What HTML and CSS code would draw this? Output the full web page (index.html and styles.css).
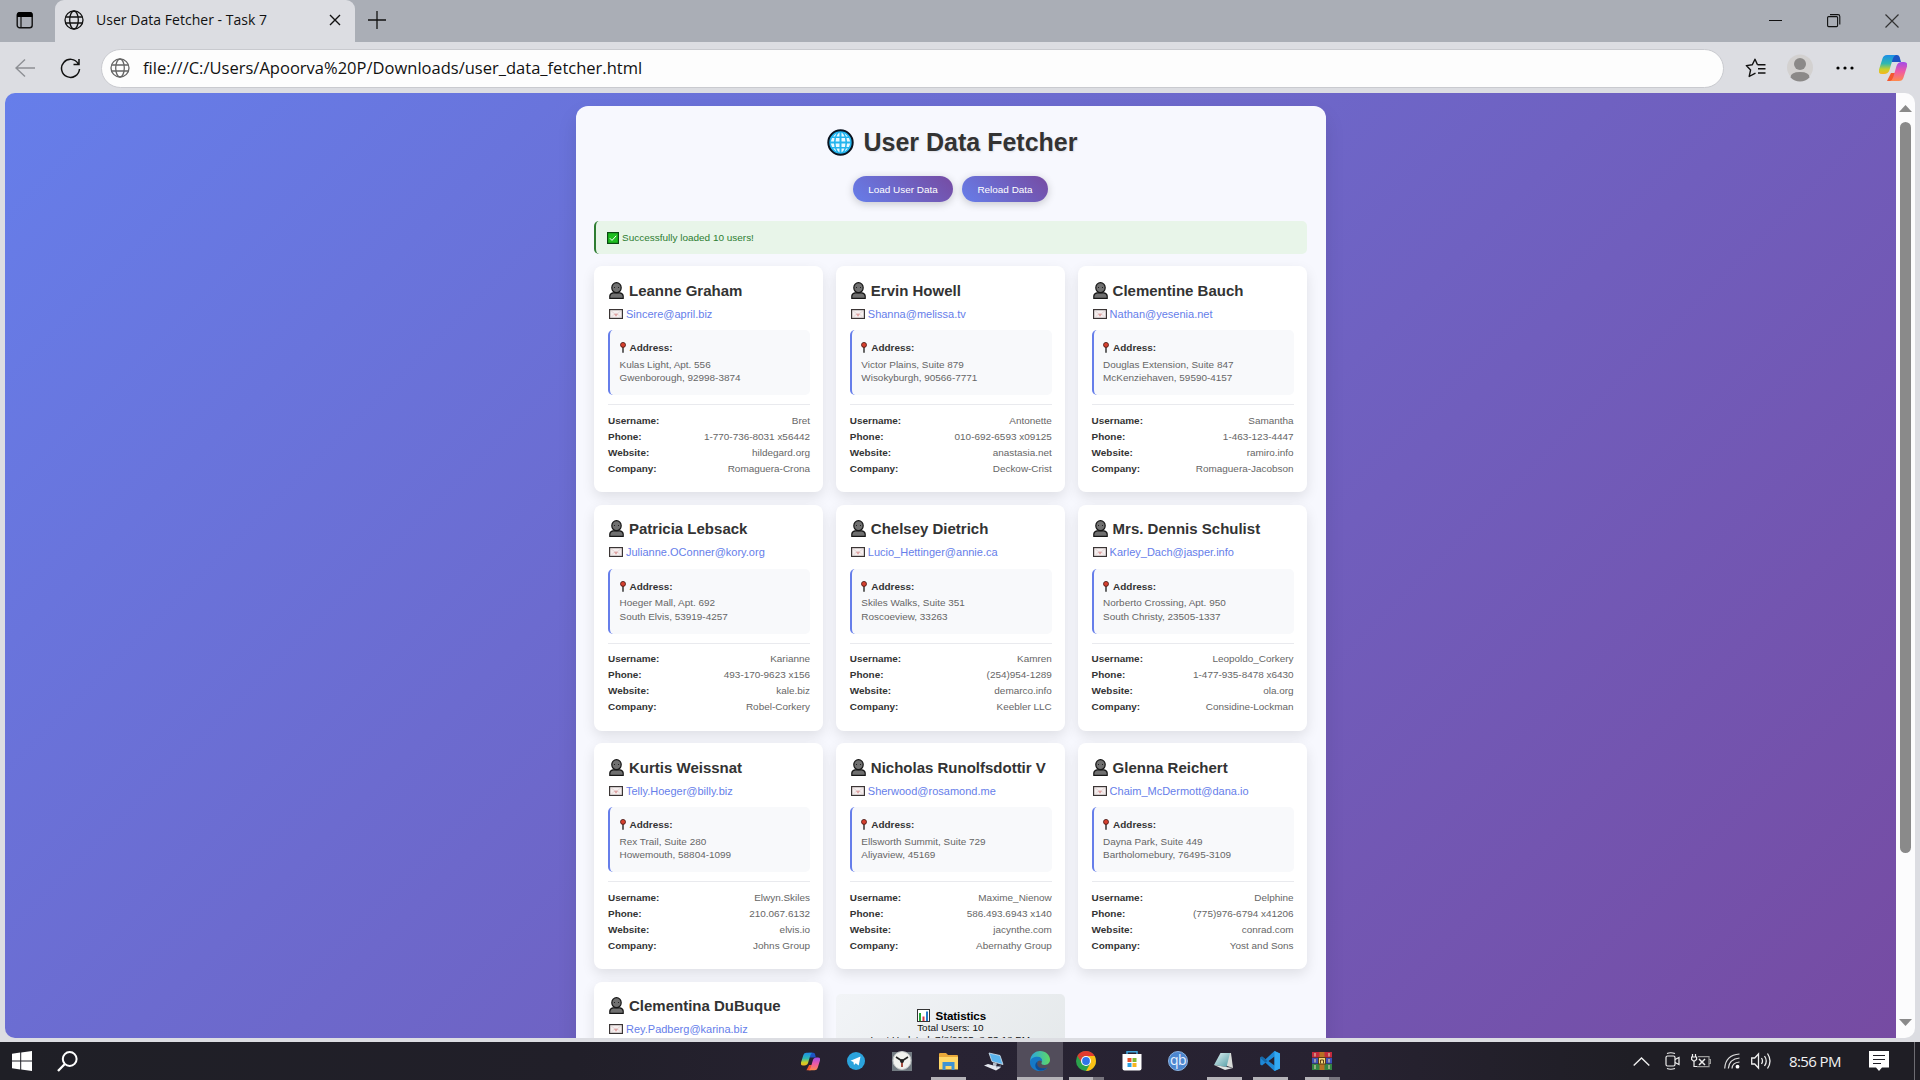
FILE: index.html
```html
<!DOCTYPE html>
<html lang="en">
<head>
<meta charset="utf-8">
<title>User Data Fetcher - Task 7</title>
<link rel="stylesheet" href="styles.css">
</head>
<body>
<svg class="defs" width="0" height="0" aria-hidden="true">
  <defs>
    <linearGradient id="cpA" x1="0" y1="0" x2="0" y2="1"><stop offset="0" stop-color="#1b8ee8"/><stop offset=".45" stop-color="#2fb8b0"/><stop offset=".75" stop-color="#c6d12a"/><stop offset="1" stop-color="#f6b51e"/></linearGradient>
    <linearGradient id="cpB" x1="0" y1="0" x2="0" y2="1"><stop offset="0" stop-color="#a24be8"/><stop offset=".5" stop-color="#ee5aa5"/><stop offset="1" stop-color="#ff8a4c"/></linearGradient>
    <linearGradient id="edA" x1="0" y1="0" x2="1" y2="0"><stop offset="0" stop-color="#2aa6e0"/><stop offset="1" stop-color="#5fd964"/></linearGradient>
    <linearGradient id="npA" x1="0" y1="0" x2="1" y2="1"><stop offset="0" stop-color="#e4f4f4"/><stop offset="1" stop-color="#4f9ba4"/></linearGradient>
    <symbol id="copilot" viewBox="0 0 28 26">
      <path d="M11 0h7q2 0 2.600 2l1.400 5h-6l-3 0z" fill="#1d55c4"/>
      <path d="M8 26h6q3 0 4-3l2-5h-8z" fill="#f4582f"/>
      <path d="M8 0h9q-2.500 1-3.300 4L10.500 15q-1.200 4-5.500 4H3q-4 0-3-4.500L3.500 3.500Q4.500 0 8 0z" fill="url(#cpA)"/>
      <path d="M20 26h-9q2.500-1 3.300-4L17.500 11q1.200-4 5.500-4h2q4 0 3 4.500l-3.500 11Q23.500 26 20 26z" fill="url(#cpB)"/>
    </symbol>
    <symbol id="globe" viewBox="0 0 20 20"><g fill="none" stroke="currentColor" stroke-width="1.300"><circle cx="10" cy="10" r="9"/><ellipse cx="10" cy="10" rx="4.300" ry="9"/><path d="M1.800 7h16.400M1.800 13h16.400"/></g></symbol>
    <symbol id="person" viewBox="0 0 15 17"><g fill="#707070" stroke="#161616" stroke-width="1.200"><path d="M.8 16.300v-2.100q0-2.700 3.200-3.400h7q3.200.7 3.200 3.400v2.100z"/><ellipse cx="7.500" cy="5.700" rx="4.700" ry="5"/></g><path d="M5.500 5v1M9.500 5v1" stroke="#222"/></symbol>
    <symbol id="mail" viewBox="0 0 14 10"><rect x=".6" y=".6" width="12.800" height="8.800" fill="#f6efef" stroke="#3b3535" stroke-width="1.200"/><path d="M2 8.500l3.500-3.500M12 8.500L8.500 5M2 1.800l5 4 5-4" fill="none" stroke="#e0d2d2" stroke-width=".8"/><path d="M5 5q2-1 4 0L7 7.800z" fill="#dfa3a3"/></symbol>
    <symbol id="pin" viewBox="0 0 6 11"><path d="M3 5v5.800" stroke="#555" stroke-width="1.800"/><circle cx="3" cy="2.900" r="2.500" fill="#d6402f" stroke="#451713" stroke-width=".8"/></symbol>
  </defs>
</svg>

<div class="tabstrip">
  <div class="tab-menu"><svg width="18" height="18" viewBox="0 0 18 18"><rect x="1.200" y="1.700" width="15" height="15" rx="2.500" fill="none" stroke="#111" stroke-width="1.400"/><path d="M1 6V3.500Q1 1 3.500 1H14q2.500 0 2.500 2.500V6z"/><path d="M5 6v10" stroke="#111" stroke-width="1.200"/></svg></div>
  <div class="tab">
    <svg width="20" height="20"><use href="#globe"/></svg>
    <span class="tab-title">User Data Fetcher - Task 7</span>
    <svg class="tab-close" width="12" height="12" viewBox="0 0 12 12"><path d="M1 1l10 10M11 1L1 11" stroke="#111" stroke-width="1.400"/></svg>
  </div>
  <svg class="new-tab" width="18" height="18" viewBox="0 0 18 18"><path d="M9 0v18M0 9h18" stroke="#111" stroke-width="1.300"/></svg>
  <div class="window-buttons">
    <svg width="14" height="14" viewBox="0 0 14 14"><path d="M0 6.500h13" stroke="#111"/></svg>
    <svg width="14" height="14" viewBox="0 0 14 14"><g fill="none" stroke="#111" stroke-width="1.100"><rect x=".6" y="2.600" width="10" height="10" rx="1"/><path d="M3 .6h8q1.800 0 1.800 1.800V10.500"/></g></svg>
    <svg width="14" height="14" viewBox="0 0 14 14"><path d="M.5.500l13 13M13.500.500l-13 13" stroke="#333" stroke-width="1.200"/></svg>
  </div>
</div>

<div class="toolbar">
  <svg class="back" width="20" height="20" viewBox="0 0 20 20"><path d="M20 10H1M10 1.500L1 10l9 8.500" fill="none" stroke="#8d8f94" stroke-width="1.400"/></svg>
  <svg class="reload" width="21" height="21" viewBox="0 0 21 21"><path d="M18.300 5.800A9 9 0 1 0 19.500 11M19 1v5.500h-5.500" fill="none" stroke="#111" stroke-width="1.500"/></svg>
  <div class="address-bar">
    <svg width="20" height="20"><use href="#globe"/></svg>
    <span class="url">file:///C:/Users/Apoorva%20P/Downloads/user_data_fetcher.html</span>
  </div>
  <svg class="favorites" width="21" height="20" viewBox="0 0 21 20"><path d="M12.500 6.800L10 1.200 7.300 6.800l-6 .8 4.300 4.300L4.200 18.500l5.300-2.800 1-.5M12.500 6.800h8M13 10.800h7.500M13 15h7.500" fill="none" stroke="#111" stroke-width="1.400" stroke-linejoin="round"/></svg>
  <svg class="avatar" width="26" height="28" viewBox="0 0 26 28"><circle cx="13" cy="13.500" r="13" fill="#d3d1d0"/><circle cx="13" cy="10" r="6" fill="#8b8988"/><path d="M3.500 23.500q0-5.500 9.500-5.500t9.500 5.500q-4 4-9.500 4t-9.500-4z" fill="#8b8988"/></svg>
  <svg class="more" width="18" height="4" viewBox="0 0 18 4"><circle cx="2" cy="2" r="1.600"/><circle cx="9" cy="2" r="1.600"/><circle cx="16" cy="2" r="1.600"/></svg>
  <svg class="copilot" width="28" height="26"><use href="#copilot"/></svg>
</div>

<div class="viewport">
  <div class="page">
    <main class="container">
      <h1><svg width="27" height="27" viewBox="0 0 27 27"><circle cx="13.500" cy="13.500" r="12.200" fill="#22b4ee" stroke="#0b1420" stroke-width="2"/><g fill="#e9f8fe"><path d="M12.500 3.500v4h-3q1-3 3-4zM14.500 3.500v4h3q-1-3-3-4zM12.500 23.500v-4h-3q1 3 3 4zM14.500 23.500v-4h3q-1 3-3 4z"/><path d="M9 9h3.500v3.500H8.600zM14.500 9H18l.4 3.500h-3.900zM8.600 14.500h3.900V18H9zM14.500 14.500h3.900L18 18h-3.500z"/><path d="M5 9h2.500L7 12.500H3.800zM22 9h-2.500l.5 3.500h3.200zM5 18h2.500L7 14.500H3.800zM22 18h-2.500l.5-3.500h3.200zM9.500 4.200L8 7.500H6zM17.500 4.200L19 7.500h2zM9.500 22.800L8 19.500H6zM17.500 22.800l1.500-3.300h2z"/></g></svg><span>User Data Fetcher</span></h1>
      <div class="actions"><button class="btn btn-load">Load User Data</button><button class="btn btn-reload">Reload Data</button></div>
      <div class="success"><svg width="12" height="12" viewBox="0 0 12 12"><rect x=".6" y=".6" width="10.800" height="10.800" fill="#1fbe22" stroke="#0b4a12" stroke-width="1.200"/><path d="M2.800 6.200l2.200 2.200 4.200-4.600" fill="none" stroke="#fff" stroke-width="1"/></svg><span>Successfully loaded 10 users!</span></div>
      <div class="grid" id="users"></div>
    </main>
  </div>
  <div class="scrollbar">
    <svg width="13" height="7" viewBox="0 0 13 7"><path d="M0 7L6.500 0 13 7z" fill="#8a8a8a"/></svg>
    <div class="thumb"></div>
    <svg width="13" height="7" viewBox="0 0 13 7"><path d="M0 0l6.500 7L13 0z" fill="#8a8a8a"/></svg>
  </div>
</div>

<div class="taskbar">
  <div class="start">
    <svg width="20" height="20" viewBox="0 0 20 20" fill="#fff"><path d="M0 2.800L8.200 1.600V9.500H0zM9.200 1.500L20 0v9.500H9.200zM0 10.500h8.200v7.900L0 17.200zM9.200 10.500H20V20L9.200 18.500z"/></svg>
    <svg width="21" height="21" viewBox="0 0 21 21"><circle cx="12.700" cy="8" r="6.900" fill="none" stroke="#fff" stroke-width="2"/><path d="M7.800 13L1 20" stroke="#fff" stroke-width="2.300"/></svg>
  </div>
  <div class="apps">
    <div class="app"><svg width="19" height="19"><use href="#copilot"/></svg></div>
    <div class="app"><svg width="18" height="18" viewBox="0 0 18 18"><circle cx="9" cy="9" r="9" fill="#2ba3dc"/><path d="M3.500 8.800l10-4.300-1.800 9-3-2.200-1.700 1.600-.6-3z" fill="#fff"/></svg></div>
    <div class="app"><svg width="20" height="20" viewBox="0 0 20 20"><rect y="1" width="20" height="19" fill="#737b82"/><circle cx="10" cy="9.500" r="9" fill="#f1f1ee" stroke="#c6c8c9"/><path d="M4 6l6 4 6-4" fill="none" stroke="#222" stroke-width="1.600"/><path d="M10 9v7" stroke="#9c3b2d" stroke-width="1.800"/><circle cx="10" cy="10" r="2" fill="#222"/></svg></div>
    <div class="app running"><svg width="19" height="17" viewBox="0 0 19 17"><path d="M0 1q0-1 1-1h6l2 2h9q1 0 1 1v13H0z" fill="#e9a93a"/><path d="M0 4h19v12.500H0z" fill="#ffd868"/><path d="M3.500 17V9h12v8h-3v-4h-6v4z" fill="#3e93d4"/></svg></div>
    <div class="app"><svg width="20" height="19" viewBox="0 0 20 19"><path d="M5 1l11 2.500 3 9L8 9.500z" fill="#5ab4ee" stroke="#d8e5ef" stroke-width=".8"/><path d="M9 10.500l4 1-1 3-3-1z" fill="#b3bcc7"/><path d="M0 13.500l4-1.500 13 3.500-5 3z" fill="#e4e8ef"/><path d="M12 15l5-1" stroke="#8894a5"/></svg></div>
    <div class="app running active"><svg width="20" height="20" viewBox="0 0 20 20"><path d="M.3 8C1.500 3 5.500 0 10 0c6 0 10 4.300 10 8.700 0 3.300-2.500 5.200-5.200 5.200-2.400 0-3.800-1-3.300-2 1-1.800.7-5-3.500-5C4 6.900 1 9 .3 12z" fill="url(#edA)"/><path d="M0 11C.4 7.500 4 5.800 7.500 5.800c3.500 0 5 2.400 4.600 4.700C11 8.700 7 9 7 13c0 4.500 6 6 10.500 3.500C15.700 19 13 20 10 20 4.500 20-.4 16 0 11z" fill="#1679c7"/><path d="M7 12.500c.2 4.500 6 6 10.500 4C14 20.500 8 20.500 6 17c-1.400-2.500-.6-5.300 2-7-.7.700-1 1.500-1 2.500z" fill="#0d4c96"/></svg></div>
    <div class="app running grouped"><svg width="20" height="20" viewBox="0 0 20 20"><circle cx="10" cy="10" r="10" fill="#2ba24c"/><path d="M1.340 5A10 10 0 0 1 18.660 5L10 6z" fill="#e33b2e"/><path d="M1.340 5L6 12l4-6z" fill="#e33b2e"/><path d="M18.660 5A10 10 0 0 1 10 20l4.300-7.500L12 5z" fill="#fbc116"/><circle cx="10" cy="10" r="5" fill="#fff"/><circle cx="10" cy="10" r="3.900" fill="#2f74e8"/></svg></div>
    <div class="app"><svg width="20" height="20" viewBox="0 0 20 20"><path d="M5 4V.8h10V4" fill="none" stroke="#3fa6dd" stroke-width="1.500"/><path d="M.5 3h19v14.500q0 2-2 2h-15q-2 0-2-2z" fill="#fff"/><path d="M5.500 7h4v4h-4z" fill="#e8502a"/><path d="M10.500 7h4v4h-4z" fill="#7eb832"/><path d="M5.500 12h4v4h-4z" fill="#2a9fe0"/><path d="M10.500 12h4v4h-4z" fill="#f8b51d"/></svg></div>
    <div class="app"><span class="qb">qb</span></div>
    <div class="app running"><svg width="20" height="18" viewBox="0 0 20 18"><path d="M7 1l10 0 2 15-6-2z" fill="#d8dcd8"/><path d="M6.500 1h9.500L12.500 15 0 13z" fill="url(#npA)"/><path d="M0 13l12.500 2L19 16 11 18z" fill="#dfe4e2"/></svg></div>
    <div class="app running"><svg width="20" height="20" viewBox="0 0 20 20"><path d="M14.500 0L20 2.500v15L14.500 20 5.500 11.800 2 14.500.2 13.500V6.500L2 5.500l3.500 2.700zM14.500 5.500L8.500 10l6 4.500z" fill="#1e88d6" fill-rule="evenodd"/><path d="M14.500 0L20 2.500v15L14.500 20z" fill="#32a8f2"/><path d="M.2 7l1.800-1.500L5.500 8.200l2 1.800-2 1.800z" fill="#1769a8"/></svg></div>
    <div class="app running grouped last"><svg width="20" height="18" viewBox="0 0 20 18"><path d="M0 0h20v5.500H0z" fill="#c22a3d"/><path d="M0 6h20v5.500H0z" fill="#3c50b4"/><path d="M0 12h20v6H0z" fill="#348444"/><path d="M3 1v3.500M3 7v3.500M3 13v4M17 1v3.500M17 7v3.500M17 13v4" stroke="#d5c9a5" stroke-width="1.200"/><path d="M7.500 0h5v18h-5z" fill="#b87123"/><rect x="6.500" y="5.500" width="7" height="6.500" fill="#f2d478" stroke="#5b3d15"/><path d="M8.500 11.500V8h3v3.500" fill="none" stroke="#5b3d15"/></svg></div>
  </div>
  <div class="tray">
    <svg width="17" height="9" viewBox="0 0 17 9"><path d="M.7 8.500L8.500 1l7.800 7.500" fill="none" stroke="#eee" stroke-width="1.400"/></svg>
    <svg class="t-cam" width="15" height="18" viewBox="0 0 15 18"><g fill="none" stroke="#eee" stroke-width="1.200"><rect x="1" y="4" width="9" height="10" rx="1.500"/><path d="M10 7.500l4-2v7l-4-2M2 1.500Q5.500.0 10 1.500M2 16.500q3.500 1.500 8 0"/></g></svg>
    <svg class="t-bat" width="20" height="14" viewBox="0 0 20 14"><g fill="none" stroke="#eee" stroke-width="1.200"><path d="M1.500 0v3M4.500 0v3M.6 3h5v2.500L3 7.500.6 5.500zM3 7.500V12.500h3"/><path d="M7 2.600h11v10H6M18.500 5.500h1v4h-1" stroke="#999"/><path d="M8 5l6 6M14 5l-6 6" stroke-width="1.500"/></g></svg>
    <svg class="t-wifi" width="16" height="16" viewBox="0 0 16 16"><g fill="none" stroke="#ddd" stroke-width="1.200"><path d="M.7 15.500Q1.500 2 15.500 1M4.300 15.500Q5 6 15.500 5M8 15.500Q8.300 9.600 15.500 9" /></g><circle cx="13.500" cy="13.700" r="1.900" fill="#fff"/></svg>
    <svg class="t-vol" width="21" height="18" viewBox="0 0 21 18"><g fill="none" stroke="#eee" stroke-width="1.300"><path d="M.7 6h3L7.500 2v14l-3.800-4h-3zM10.500 6q2 3 0 6M13.500 4q3.500 5 0 10M16.500 1.500q5 7.500 0 15"/></g></svg>
    <span class="clock">8:56 PM</span>
    <svg class="t-note" width="20" height="20" viewBox="0 0 20 20"><path d="M0 0h20v16.500h-7L10 20l-3-3.500H0z" fill="#fff"/><path d="M4 4.500h12M4 8.500h12M4 12.500h8" stroke="#1f1e26" stroke-width="1.200"/></svg>
    <i class="show-desktop"></i>
  </div>
</div>
<script src="script.js"></script>
</body>
</html>
```

FILE: styles.css
```css
* { box-sizing: border-box; margin: 0; padding: 0; }
html, body { width: 1920px; height: 1080px; overflow: hidden; }
body { display: flex; flex-direction: column; background: #dcdde2; font-family: "Liberation Sans", Arial, sans-serif; }
svg { display: block; flex: none; }
.defs { position: absolute; }

/* Browser frame */
.tabstrip { height: 42px; background: #aaaeb6; display: flex; font-family: "Open Sans", "Noto Sans", sans-serif; color: #111; }
.tab-menu { width: 55px; background: #aaaeb6; padding: 11px 0 0 16px; }
.tab { width: 300px; background: #dcdde2; border-radius: 9px 9px 0 0; display: flex; align-items: center; padding: 0 14px 2px 9px; }
.tab-title { font-size: 14px; margin-left: 12px; padding-bottom: 2px; white-space: nowrap; letter-spacing: 0.030px; }
.tab-close { margin-left: auto; }
.new-tab { margin: 11px 0 0 13px; }
.window-buttons { margin: 14px 21px 0 auto; display: flex; gap: 44px; }
.toolbar { height: 51px; padding: 7px 13px 6px 15px; display: flex; align-items: center; }
.reload { margin-left: 25px; }
.address-bar { margin-left: 20px; width: 1623px; height: 39px; border-radius: 20px; background: #fdfdfd; border: 1px solid #c9cacf; display: flex; align-items: center; padding-left: 8px; color: #666; }
.url { margin-left: 13px; padding-bottom: 2px; color: #111; font: 16.500px "Open Sans", "Noto Sans", sans-serif; white-space: nowrap; letter-spacing: 0.010px; }
.favorites { margin-left: 21px; }
.avatar { margin-left: 21px; }
.more { margin-left: 23px; }
.copilot { margin-left: 25px; }

/* Page */
.viewport { margin: 0 5px; height: 945px; flex: none; border-radius: 10px; overflow: hidden; display: flex; }
.page { width: 1891px; height: 945px; overflow: hidden; background: linear-gradient(135deg, #667eea 0%, #764ba2 100%); padding-top: 13px; }
.container { width: 750px; height: 1100px; margin-left: 571px; background: #f7f8fe; border-radius: 12px; padding: 22px 19px 0 18px; box-shadow: 0 10px 20px rgba(0,0,0,.1); }
h1 { display: flex; justify-content: center; align-items: center; gap: 10px; height: 29px; padding-left: 3px; font-size: 25px; line-height: 29px; color: #333; text-shadow: 1px 1px 2px rgba(0,0,0,.1); }
.actions { display: flex; justify-content: center; gap: 9px; margin-top: 19px; }
.btn { height: 26px; border: 0; border-radius: 13px; color: #fff; font: 9.950px "Liberation Sans", Arial, sans-serif; background: linear-gradient(45deg, #667eea, #764ba2); box-shadow: 0 2px 8px rgba(0,0,0,.2); }
.btn-load { width: 100px; }
.btn-reload { width: 86px; }
.success { margin-top: 19px; height: 33px; display: flex; align-items: center; gap: 3px; padding-left: 11px; border-left: 2px solid #2e7d32; border-radius: 5px; background: #e8f5e9; color: #2e7d32; font-size: 9.980px; }
.grid { margin-top: 12px; display: grid; grid-template-columns: repeat(3, 229px); column-gap: 12.800px; row-gap: 12.550px; }
.card { height: 226px; background: #fff; border-radius: 8px; padding: 13.800px 13px 0 14px; box-shadow: 0 5px 13px rgba(0,0,0,.1); font-size: 9.950px; }
.name { display: flex; align-items: center; gap: 5px; height: 21px; padding-left: 1px; font-size: 15px; color: #333; white-space: nowrap; }
.email { display: flex; align-items: center; gap: 3px; margin-top: 6px; height: 14px; padding-left: 1px; font-size: 11px; color: #667eea; }
.address { margin-top: 9.200px; height: 65px; padding: 10.800px 10px 0 9.500px; border-left: 2px solid #667eea; border-radius: 5px; background: #f8f9fb; color: #666; line-height: 13.300px; }
.address strong { display: flex; align-items: center; gap: 4px; color: #333; height: 14px; margin-bottom: 3px; }
.details { margin-top: 9px; border-top: 1px solid #e9eaee; padding-top: 7.800px; }
.row { display: flex; justify-content: space-between; height: 16px; line-height: 16px; color: #666; }
.row b { color: #333; }
.stats { margin-top: 12.500px; height: 80px; border-radius: 5px; background: linear-gradient(135deg, #f2f4f7, #e4e8ea); display: flex; flex-direction: column; align-items: center; padding-top: 15px; font-size: 9.950px; line-height: 12px; color: #111; }
.stats h3 { display: flex; align-items: center; gap: 6px; padding-left: 2px; font-size: 11.600px; line-height: 13px; color: #000; }
.stats h3 span { letter-spacing: -0.1px; }
.scrollbar { width: 19px; background: #fcfcfd; display: flex; flex-direction: column; align-items: center; padding: 12px 0; }
.thumb { width: 11px; height: 731px; border-radius: 6px; background: #8a8a8a; margin: 10px 0 auto; }

/* Taskbar */
.taskbar { margin-top: 4px; height: 38px; flex: none; display: grid; grid-template-columns: 787px auto 1fr; background: linear-gradient(90deg, #1f1f26 0, #211f29 30%, #282333 48%, #272231 70%, #1f1e25 85%); }
.start { display: flex; align-items: center; gap: 25px; padding-left: 12px; }
.apps { display: flex; }
.app { width: 46px; display: flex; align-items: center; justify-content: center; background-repeat: no-repeat; background-position: center bottom; }
.running { background-image: linear-gradient(#b5b3b8, #b5b3b8); background-size: 35px 3px; }
.active { background-color: #524d5b; background-size: 46px 3px; }
.grouped { background-image: linear-gradient(90deg, #b5b3b8 70%, #77747d 70%); }
.last { margin-left: 6px; }
.qb { width: 20px; height: 20px; border-radius: 50%; background: #4c86cf; border: 1px solid #8db4e2; color: #e8f2ff; font: 14px/15px "Open Sans", sans-serif; text-align: center; letter-spacing: -0.5px; }
.tray { display: flex; align-items: center; justify-content: flex-end; }
.t-cam { margin-left: 15px; }
.t-bat { margin-left: 11px; }
.t-wifi { margin-left: 13px; }
.t-vol { margin-left: 11px; }
.clock { margin-left: 17px; width: 53px; font: 15px "Open Sans", "Noto Sans", sans-serif; letter-spacing: -0.6px; color: #f2f2f2; white-space: nowrap; }
.t-note { margin-left: 27px; }
.show-desktop { margin: 0 5px 0 25px; width: 1px; height: 38px; background: #6d6c72; }
```

FILE: script.js
```js
const users = [
  ["Leanne Graham", "Sincere@april.biz", "Kulas Light, Apt. 556", "Gwenborough, 92998-3874", "Bret", "1-770-736-8031 x56442", "hildegard.org", "Romaguera-Crona"],
  ["Ervin Howell", "Shanna@melissa.tv", "Victor Plains, Suite 879", "Wisokyburgh, 90566-7771", "Antonette", "010-692-6593 x09125", "anastasia.net", "Deckow-Crist"],
  ["Clementine Bauch", "Nathan@yesenia.net", "Douglas Extension, Suite 847", "McKenziehaven, 59590-4157", "Samantha", "1-463-123-4447", "ramiro.info", "Romaguera-Jacobson"],
  ["Patricia Lebsack", "Julianne.OConner@kory.org", "Hoeger Mall, Apt. 692", "South Elvis, 53919-4257", "Karianne", "493-170-9623 x156", "kale.biz", "Robel-Corkery"],
  ["Chelsey Dietrich", "Lucio_Hettinger@annie.ca", "Skiles Walks, Suite 351", "Roscoeview, 33263", "Kamren", "(254)954-1289", "demarco.info", "Keebler LLC"],
  ["Mrs. Dennis Schulist", "Karley_Dach@jasper.info", "Norberto Crossing, Apt. 950", "South Christy, 23505-1337", "Leopoldo_Corkery", "1-477-935-8478 x6430", "ola.org", "Considine-Lockman"],
  ["Kurtis Weissnat", "Telly.Hoeger@billy.biz", "Rex Trail, Suite 280", "Howemouth, 58804-1099", "Elwyn.Skiles", "210.067.6132", "elvis.io", "Johns Group"],
  ["Nicholas Runolfsdottir V", "Sherwood@rosamond.me", "Ellsworth Summit, Suite 729", "Aliyaview, 45169", "Maxime_Nienow", "586.493.6943 x140", "jacynthe.com", "Abernathy Group"],
  ["Glenna Reichert", "Chaim_McDermott@dana.io", "Dayna Park, Suite 449", "Bartholomebury, 76495-3109", "Delphine", "(775)976-6794 x41206", "conrad.com", "Yost and Sons"],
  ["Clementina DuBuque", "Rey.Padberg@karina.biz"]
];
const labels = ["Username:", "Phone:", "Website:", "Company:"];

const more = (street, city, info) => street ? `
    <div class="address"><strong><svg width="6" height="11"><use href="#pin"/></svg>Address:</strong>${street}<br>${city}</div>
    <div class="details">${labels.map((l, i) => `<div class="row"><b>${l}</b><span>${info[i]}</span></div>`).join("")}</div>` : "";

const cards = users.map(([name, email, street, city, ...info]) => `
  <article class="card">
    <h2 class="name"><svg width="15" height="17"><use href="#person"/></svg><span>${name}</span></h2>
    <div class="email"><svg width="14" height="10"><use href="#mail"/></svg><span>${email}</span></div>${more(street, city, info)}
  </article>`).join("");

const stats = `
  <section class="stats">
    <h3><svg width="13" height="13" viewBox="0 0 13 13"><rect x=".5" y=".5" width="12" height="12" fill="#fff" stroke="#333"/><path d="M2 4h2v8H2z" fill="#22a834"/><path d="M5.500 7.500h2V12h-2z" fill="#d8384a"/><path d="M9 2.500h2V12H9z" fill="#2577c9"/></svg><span>Statistics</span></h3>
    <p>Total Users: 10</p>
    <p>Last Updated: 7/8/2025, 8:53:18 PM</p>
  </section>`;

document.getElementById("users").innerHTML = cards + stats;
```
